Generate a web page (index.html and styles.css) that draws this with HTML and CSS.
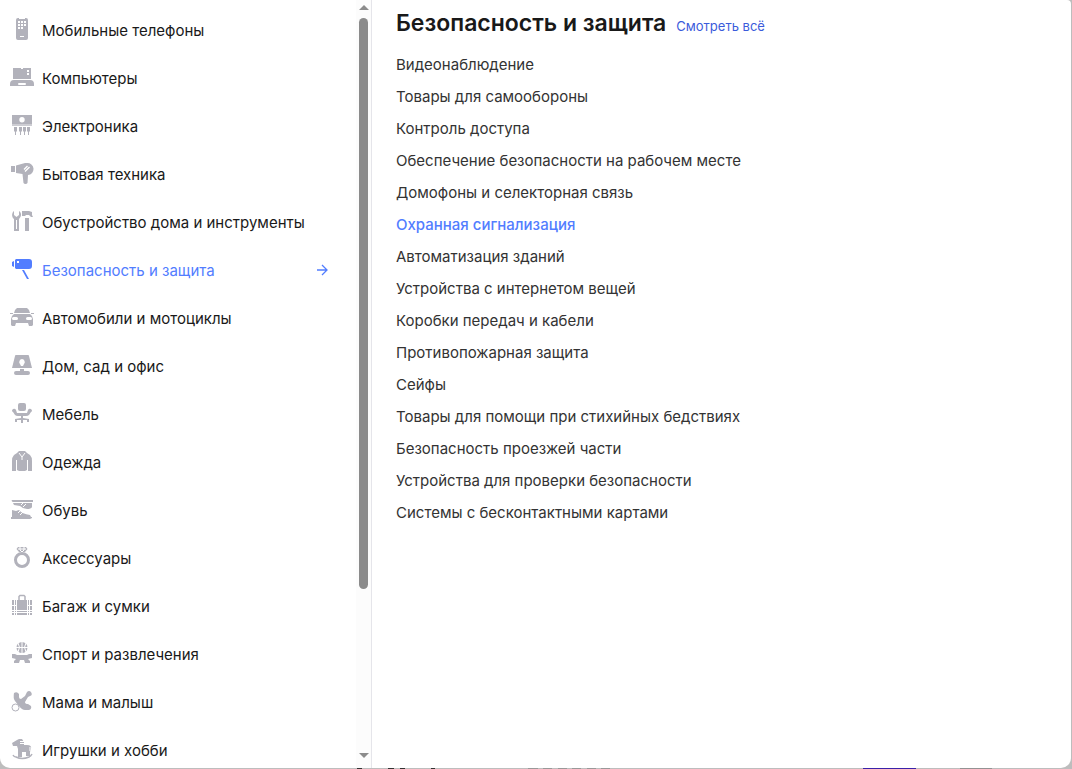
FILE: index.html
```html
<!DOCTYPE html>
<html lang="ru">
<head>
<meta charset="utf-8">
<meta name="viewport" content="width=device-width, initial-scale=1">
<title>Каталог</title>
<link rel="stylesheet" href="styles.css">
</head>
<body>
<div class="page">
<div class="catalog">
  <nav class="sidebar" aria-label="Категории">
    <ul class="categories">
      <li><a class="category" href="#"><svg class="icon" viewBox="0 0 24 24"><path fill-rule="evenodd" d="M8 1h1v1h6V1h1a2 2 0 0 1 2 2v18a2 2 0 0 1-2 2H8a2 2 0 0 1-2-2V3a2 2 0 0 1 2-2zM8 4v2h2V4zm3 0v2h2V4zm3 0v2h2V4zM8 7v2h2V7zm3 0v2h2V7zm3 0v2h2V7zm-6 3v2h2v-2zm3 0v2h2v-2zm-1 9v1h4v-1z"/></svg><span>Мобильные телефоны</span></a></li>
      <li><a class="category" href="#"><svg class="icon" viewBox="0 0 24 24"><path fill-rule="evenodd" d="M3 3h8v1h2V3h8v11H3zM17 5v2h2V5zm0 3v2h2V8zM4 15h16a4 4 0 0 1 4 4v2H0v-2a4 4 0 0 1 4-4zm5 3a1 1 0 0 0 0 2h6a1 1 0 0 0 0-2z"/></svg><span>Компьютеры</span></a></li>
      <li><a class="category" href="#"><svg class="icon" viewBox="0 0 24 24"><path fill-rule="evenodd" d="M2 2h20v9H2zm10 2a2.700 2.700 0 1 0 0 5.400a2.700 2.700 0 0 0 0-5.400z"/><path opacity=".65" d="M2 11h20v2H2z"/><path d="M4 14h3v4l-1 1v3H5v-3l-1-1zM9 14h3v4l-1 1v3h-1v-3l-1-1zM13 14h3v4l-1 1v3h-1v-3l-1-1zM17 14h3v4l-1 1v3h-1v-3l-1-1z"/></svg><span>Электроника</span></a></li>
      <li><a class="category" href="#"><svg class="icon" viewBox="0 0 24 24"><path d="M1 5h4v6H1zM6 4.500 15 2h2a6 6 0 0 1 1 12l-.5 8a2.400 2.400 0 0 1-4 0l-1-9-6.500-1z"/><path class="cut" d="m14 8.500 3.500-3.500M15 10.500l4.500-4.500"/></svg><span>Бытовая техника</span></a></li>
      <li><a class="category" href="#"><svg class="icon" viewBox="0 0 24 24"><path fill-rule="evenodd" d="M4 2v4l2.500 2L9 6V2c3 2 2.500 5.500 0 8v12H4V10C1.500 8 1.500 4 4 2zm2 9v9h1v-9zM12 2h7l3 1v3l1 2h-2l-2-2h-3l-1 1h-3zM15 9h4v13h-4z"/></svg><span>Обустройство дома и инструменты</span></a></li>
      <li><a class="category active" href="#" aria-current="true"><svg class="icon" viewBox="0 0 24 24"><path fill-rule="evenodd" d="M2 5l2-1v6l-2-1zM6 2h13q3 0 3 3v4q0 3-3 3H6l-1-1V3zm1 2v2h2V4zM12 13h2l5 9h-2z"/></svg><span>Безопасность и защита</span><svg class="arrow" viewBox="0 0 12 12"><path d="M1 6h10M6 1l5 5-5 5"/></svg></a></li>
      <li><a class="category" href="#"><svg class="icon" viewBox="0 0 24 24"><path fill-rule="evenodd" d="M7 3h10l2 2 1 3H4l1-3zM0 8h3v1H0zM21 8h3v1h-3zM4 9h16q3 2 3 5v6l-1 1h-3l-1-3H6l-1 3H2l-1-1v-6q0-3 3-5zm-.5 3a1.500 1.500 0 0 0 0 3h3a1.500 1.500 0 0 0 0-3zm14 0a1.500 1.500 0 0 0 0 3h3a1.500 1.500 0 0 0 0-3z"/></svg><span>Автомобили и мотоциклы</span></a></li>
      <li><a class="category" href="#"><svg class="icon" viewBox="0 0 24 24"><path fill-rule="evenodd" d="M6 2h12q1 0 1 1l3 12H2L5 3q0-1 1-1zm6 4a3 3 0 0 0-2 5l1 2h2l1-2a3 3 0 0 0-2-5zM10 16h4v2h4q2 0 2 2t-2 2H6q-2 0-2-2t2-2h4z"/></svg><span>Дом, сад и офис</span></a></li>
      <li><a class="category" href="#"><svg class="icon" viewBox="0 0 24 24"><path d="M10 2h4q2 0 2 2v4q0 2-2 2h-4q-2 0-2-2V4q0-2 2-2zM3 8q2-1 3 1l1 3h10l1-3q1-2 3-1 2 2 0 3l-2 3q-1 1-3 1h-3v2l6 1v3h-2v-2h-4v3h-2v-3H7v2H5v-3l6-1v-2H8q-2 0-3-1l-2-3q-2-1 0-3z"/></svg><span>Мебель</span></a></li>
      <li><a class="category" href="#"><svg class="icon" viewBox="0 0 24 24"><path d="M9 2h6l2 2 3 2q2 2 2 6v10h-4V12h-1v9l-2 1H9l-2-1v-9H6v10H2V12q0-4 2-6l3-2z"/><path class="cut thin" d="M9 4l3 4 3-4M12 8v3M6.500 11v11M17.500 11v11"/></svg><span>Одежда</span></a></li>
      <li><a class="category" href="#"><svg class="icon" viewBox="0 0 24 24"><path d="M3 3h20v2H3q-2-1-1-2zM3 6h19v4q-1 2-5 2-4 0-7-3L4 8zM2 13l4 1 3-1q3 4 11 5l1 2H2zM1 20h21v1l-2 1H1z"/><path class="cut thin" d="m11 8 2-2M13 10l3-3M8 16l2-2M10 18l3-3"/></svg><span>Обувь</span></a></li>
      <li><a class="category" href="#"><svg class="icon" viewBox="0 0 24 24"><path d="M8 2h8l1.500 2-2.500 3H9L6.500 4z"/><path class="cut thin" d="M8 4h8M10 2v3l2 2 2-2V2"/><circle class="ring" cx="12" cy="15" r="6.500"/></svg><span>Аксессуары</span></a></li>
      <li><a class="category" href="#"><svg class="icon" viewBox="0 0 24 24"><path d="M2 7h2v15H2zM5 7h1v15H5zM7 7h10v15H7zM18 7h1v15h-1zM20 7h2v15h-2z"/><path class="cut thin" d="M2 12.500h5M17 12.500h5M2 17.500h20M2 19.500h20"/><path class="line" d="M9 7.500v-4l1-1h4l1 1v4"/></svg><span>Багаж и сумки</span></a></li>
      <li><a class="category" href="#"><svg class="icon" viewBox="0 0 24 24"><circle cx="12" cy="6.500" r="5.500"/><path class="cut thin" d="M6 6.500h12M12 1v11M8 2q3 4 0 9M16 2q-3 4 0 9"/><path d="M2 13h3l2 1h10l2-1h3v4l-4 1 2 2v2h-5l-1-3h-4l-1 3H4v-2l2-2-4-1z"/></svg><span>Спорт и развлечения</span></a></li>
      <li><a class="category" href="#"><svg class="icon" viewBox="0 0 24 24"><path d="M4 4q3-2 5 1v3q0 2 2 2l4-3 2-4q2-2 4 0 2 3-1 4l-2 1-3 5q0 2 3 2l3 2q1 3-2 4h-4q-3 0-6-4L5 12Q3 9 4 4z"/><circle class="bg-line" cx="5.500" cy="18.500" r="3.500"/></svg><span>Мама и малыш</span></a></li>
      <li><a class="category" href="#"><svg class="icon" viewBox="0 0 24 24"><path d="M2 6l5-3 2-1h3l2 3v3h3q5 0 4 4l-1 3v4h-4v-4h-4v5H8v-8L7 9H3z"/><path class="cut thin" d="M10 4.500h4M10 6.500h5M20 10v4"/><path class="line" d="M3 18q1 2 3 2 6 3 13 0 2-1 3-3"/></svg><span>Игрушки и хобби</span></a></li>
    </ul>
    <div class="scrollbar" aria-hidden="true">
      <span class="up"></span>
      <span class="track"><span class="thumb"></span></span>
      <span class="down"></span>
    </div>
  </nav>
  <main class="content">
    <header class="heading">
      <h1>Безопасность и защита</h1>
      <a class="all" href="#">Смотреть всё</a>
    </header>
    <ul class="links">
      <li><a href="#">Видеонаблюдение</a></li>
      <li><a href="#">Товары для самообороны</a></li>
      <li><a href="#">Контроль доступа</a></li>
      <li><a href="#">Обеспечение безопасности на рабочем месте</a></li>
      <li><a href="#">Домофоны и селекторная связь</a></li>
      <li><a class="current" href="#">Охранная сигнализация</a></li>
      <li><a href="#">Автоматизация зданий</a></li>
      <li><a href="#">Устройства с интернетом вещей</a></li>
      <li><a href="#">Коробки передач и кабели</a></li>
      <li><a href="#">Противопожарная защита</a></li>
      <li><a href="#">Сейфы</a></li>
      <li><a href="#">Товары для помощи при стихийных бедствиях</a></li>
      <li><a href="#">Безопасность проезжей части</a></li>
      <li><a href="#">Устройства для проверки безопасности</a></li>
      <li><a href="#">Системы с бесконтактными картами</a></li>
    </ul>
  </main>
</div>
</div>
</body>
</html>
```
FILE: styles.css
```css
* { box-sizing: border-box; }
body {
  margin: 0;
  font-family: Inter, "Liberation Sans", sans-serif;
  font-size: 15px;
  color: #191919;
}
ul { list-style: none; margin: 0; padding: 0; }
a { color: inherit; text-decoration: none; }

.page {
  height: 100vh;
  padding: 0 1px 1px 0;
  background:
    linear-gradient(90deg,
      transparent 357px, #333 357px 362px, transparent 362px 388px,
      #333 388px 394px, transparent 394px 400px, #333 400px 405px,
      transparent 405px 431px, #333 431px 435px, transparent 435px 863px,
      #3a22a8 863px 916px, transparent 916px 960px, #939393 960px 992px,
      transparent 992px) 0 100% / 100% 1px no-repeat,
    linear-gradient(90deg,
      transparent 528px, #999 528px 538px, transparent 538px 543px,
      #999 543px 552px, transparent 552px 558px, #999 558px 567px,
      transparent 567px 572px, #999 572px 581px, transparent 581px 587px,
      #999 587px 596px, transparent 596px 601px, #999 601px 610px,
      transparent 610px) 0 100% / 100% 1px no-repeat,
    #bdbdbd;
}
.catalog {
  display: flex;
  height: 100%;
  overflow: hidden;
  background: #fff;
  border-radius: 0 4px 10px 10px;
}

.sidebar {
  display: flex;
  flex: 0 0 372px;
  border-right: 1px solid #e5e5ea;
}
.categories {
  flex: 1;
  overflow: hidden;
  padding: 6px 28px 0 10px;
}
.category {
  display: flex;
  align-items: center;
  gap: 8px;
  height: 48px;
  white-space: nowrap;
}
.icon {
  width: 24px;
  height: 24px;
  margin-bottom: 2px;
  flex: none;
  fill: #b2b2bb;
}
.cut { fill: none; stroke: #fff; stroke-width: 1.4; }
.thin { stroke-width: 1; }
.line { fill: none; stroke: #b2b2bb; stroke-width: 1.5; }
.ring { fill: none; stroke: #b2b2bb; stroke-width: 3; }
.bg-line { fill: #fff; stroke: #b2b2bb; stroke-width: 1; }
.active { color: #527dff; }
.active .icon { fill: #527dff; }
.arrow {
  width: 12px;
  height: 12px;
  margin-left: auto;
  fill: none;
  stroke: #527dff;
  stroke-width: 1.3;
}

.scrollbar {
  display: flex;
  flex-direction: column;
  align-items: center;
  width: 15px;
  padding: 5px 0 10px;
  background: #fcfcfc;
}
.up, .down {
  border: 5px solid transparent;
  border-top-width: 0;
  border-bottom: 5px solid #8b8b8b;
}
.down { transform: rotate(180deg); }
.track { flex: 1; padding: 8px 0; }
.thumb {
  display: block;
  width: 9px;
  height: 78.6%;
  border-radius: 5px;
  background: #8b8b8b;
}

.content { flex: 1; padding: 8px 24px; }
.heading { display: flex; align-items: baseline; gap: 10px; }
h1 {
  margin: 0;
  font-size: 23px;
  line-height: 30px;
  font-weight: 600;
}
.all { font-size: 13px; color: #3b5bdb; }
.links { padding-top: 11px; color: #333; }
.links li { line-height: 32px; }
.current { color: #527dff; font-weight: 500; }
```
